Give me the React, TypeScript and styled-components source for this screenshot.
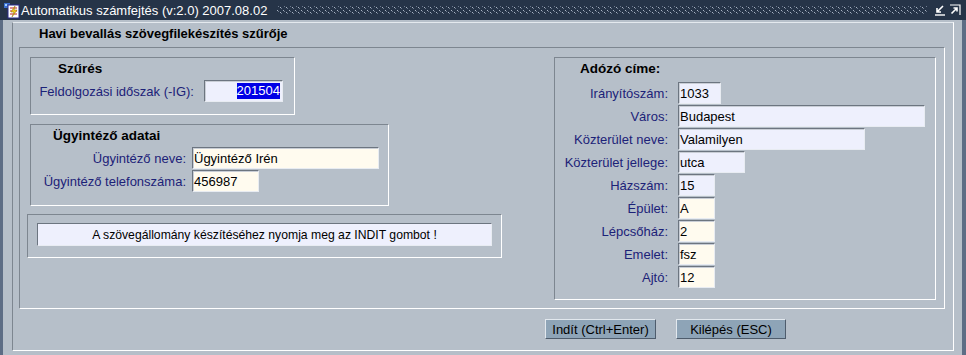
import React from "react";
import styled, { createGlobalStyle } from "styled-components";

const Global = createGlobalStyle`
  html, body { margin: 0; padding: 0; background: #b6bfc9; }
  body { font-family: "Liberation Sans", Arial, sans-serif; font-size: 13px; }
`;

const C = {
  bg: "#b6bfc9",
  title: "#263448",
  edge: "#5d6d85",
  shade: "#7d8690",
  light: "#ffffff",
  label: "#1c2278",
  lavender: "#eef0fd",
  cream: "#fffbef",
};

const Window = styled.div`
  width: 966px;
  height: 355px;
  display: flex;
  flex-direction: column;
  background: ${C.bg};
  overflow: hidden;
`;

const TitleBar = styled.div`
  height: 20px;
  flex: none;
  display: flex;
  align-items: center;
  background: ${C.title};
  padding: 0 5px 0 3px;
`;

const TitleText = styled.span`
  color: #ffffff;
  font-size: 13px;
  margin-left: 1px;
  white-space: nowrap;
`;

const Dots = styled.svg`
  flex: 1;
  height: 10px;
  margin: 0 6px 0 10px;
`;

const Controls = styled.div`
  display: flex;
  gap: 3px;
  align-items: center;
`;

const Body = styled.div`
  flex: 1;
  display: flex;
  border-left: 3px solid ${C.edge};
  border-right: 4px solid ${C.edge};
  padding: 2px 8px 4px 9px;
`;

const OuterFrame = styled.div`
  width: 942px;
  height: 329px;
  box-sizing: border-box;
  border-style: solid;
  border-width: 1px;
  border-color: #e4e9ee ${C.light} ${C.light} ${C.shade};
  display: flex;
  flex-direction: column;
`;

const Heading = styled.div`
  height: 24px;
  line-height: 22px;
  padding-left: 26px;
  font-weight: bold;
  font-size: 13px;
  color: #000;
`;

const Etched = styled.div<{ $w: number; $h: number; $ml?: number; $mt?: number }>`
  width: ${(p) => p.$w}px;
  height: ${(p) => p.$h}px;
  margin-left: ${(p) => p.$ml ?? 0}px;
  margin-top: ${(p) => p.$mt ?? 0}px;
  box-sizing: border-box;
  flex: none;
  border-style: solid;
  border-width: 1px;
  border-color: ${C.shade} ${C.light} ${C.light} ${C.shade};
`;

const BigFrame = styled(Etched)`
  display: flex;
`;

const LeftCol = styled.div`
  width: 534px;
  display: flex;
  flex-direction: column;
`;

const GroupTitle = styled.div<{ $pl: number; $h: number }>`
  font-weight: bold;
  font-size: 13.5px;
  padding-left: ${(p) => p.$pl}px;
  height: ${(p) => p.$h}px;
  line-height: ${(p) => p.$h}px;
  color: #000;
`;

const Row = styled.div<{ $lw: number; $gap: number; $pl: number }>`
  display: flex;
  align-items: center;
  height: 22px;
  padding-left: ${(p) => p.$pl}px;
  gap: ${(p) => p.$gap}px;
  margin-bottom: 1px;
  & > label {
    width: ${(p) => p.$lw}px;
  }
`;

const Label = styled.label`
  color: ${C.label};
  text-align: right;
  white-space: nowrap;
  flex: none;
  font-size: 13px;
`;

const Field = styled.div<{ $w: number; $tone: "lav" | "cream"; $right?: boolean }>`
  width: ${(p) => p.$w}px;
  height: 22px;
  box-sizing: border-box;
  flex: none;
  background: ${(p) => (p.$tone === "lav" ? C.lavender : C.cream)};
  border-style: solid;
  border-width: 1px;
  border-color: #6c7580 #e8ecf2 #e8ecf2 #6c7580;
  box-shadow: inset 1px 1px 0 #c9ced6;
  display: flex;
  align-items: center;
  justify-content: ${(p) => (p.$right ? "flex-end" : "flex-start")};
  padding: ${(p) => (p.$right ? "0 2px 0 0" : "0 0 0 1px")};
  font-size: 13px;
  color: #000;
  white-space: nowrap;
`;

const Selected = styled.span`
  background: #0000e6;
  color: #ffffff;
  line-height: 16px;
`;

const Message = styled.div`
  margin: 8px 0 0 9px;
  width: 455px;
  height: 23px;
  box-sizing: border-box;
  background: ${C.lavender};
  border-style: solid;
  border-width: 1px;
  border-color: #6c7580 #e8ecf2 #e8ecf2 #6c7580;
  display: flex;
  align-items: center;
  justify-content: center;
  font-size: 12.2px;
  color: #000;
`;

const AddressRows = styled.div`
  display: flex;
  flex-direction: column;
  margin-top: 2px;
`;

const ButtonRow = styled.div`
  display: flex;
  gap: 20px;
  margin: 10px 0 0 532px;
`;

const Button = styled.button<{ $w: number }>`
  width: ${(p) => p.$w}px;
  height: 20px;
  box-sizing: border-box;
  padding: 0;
  background: #8ea4b7;
  border-style: solid;
  border-width: 1px;
  border-color: #e2e8ee #4e5c6c #4e5c6c #e2e8ee;
  font-family: "Liberation Sans", Arial, sans-serif;
  font-size: 13px;
  color: #000;
`;

const AppIcon = () => (
  <svg width="17" height="17" viewBox="0 0 17 17">
    <rect x="1" y="1" width="6" height="5" fill="#3a6fd0" />
    <rect x="2" y="2" width="2" height="2" fill="#9fd0ff" />
    <rect x="5" y="3" width="11" height="13" fill="#ffffff" stroke="#2a2a8a" strokeWidth="1" />
    <path d="M7 6h7M7 9h7M7 12h7" stroke="#c02020" strokeWidth="1.2" />
    <path d="M12 4 L8 10 H11 L9 15 L14 8 H11 Z" fill="#f5d020" stroke="#8a6a00" strokeWidth="0.5" />
  </svg>
);

const MinIcon = () => (
  <svg width="12" height="12" viewBox="0 0 12 12">
    <path d="M9 2 L3 8 M3 4 V8 H7" stroke="#ffffff" strokeWidth="1.6" fill="none" />
    <path d="M1 11 H11" stroke="#ffffff" strokeWidth="1.4" />
  </svg>
);

const MaxIcon = () => (
  <svg width="12" height="12" viewBox="0 0 12 12">
    <path d="M1 1 H11 V11" stroke="#ffffff" strokeWidth="1.2" fill="none" />
    <path d="M2.5 9.5 L8 4 M4.5 4 H8 V7.5" stroke="#ffffff" strokeWidth="1.6" fill="none" />
  </svg>
);

type Addr = { label: string; value: string; w: number; tone: "lav" | "cream" };
const address: Addr[] = [
  { label: "Irányítószám:", value: "1033", w: 43, tone: "lav" },
  { label: "Város:", value: "Budapest", w: 247, tone: "lav" },
  { label: "Közterület neve:", value: "Valamilyen", w: 187, tone: "lav" },
  { label: "Közterület jellege:", value: "utca", w: 67, tone: "lav" },
  { label: "Házszám:", value: "15", w: 37, tone: "lav" },
  { label: "Épület:", value: "A", w: 37, tone: "cream" },
  { label: "Lépcsőház:", value: "2", w: 37, tone: "cream" },
  { label: "Emelet:", value: "fsz", w: 37, tone: "cream" },
  { label: "Ajtó:", value: "12", w: 37, tone: "cream" },
];

export default function App() {
  return (
    <Window>
      <Global />
      <TitleBar>
        <AppIcon />
        <TitleText>Automatikus számfejtés (v:2.0) 2007.08.02</TitleText>
        <Dots>
          <defs>
            <pattern id="dp" width="6" height="5" patternUnits="userSpaceOnUse">
              <rect x="0" y="0" width="1" height="1" fill="#a9b3c2" />
              <rect x="1" y="1" width="1" height="1" fill="#6d7a8e" />
              <rect x="3" y="2" width="1" height="1" fill="#a9b3c2" />
              <rect x="4" y="3" width="1" height="1" fill="#6d7a8e" />
            </pattern>
          </defs>
          <rect x="0" y="1" width="100%" height="9" fill="url(#dp)" />
        </Dots>
        <Controls>
          <MinIcon />
          <MaxIcon />
        </Controls>
      </TitleBar>
      <Body>
        <OuterFrame>
          <Heading>Havi bevallás szövegfilekészítés szűrője</Heading>
          <BigFrame $w={926} $h={262} $ml={6}>
            <LeftCol>
              <Etched $w={265} $h={58} $ml={10} $mt={9}>
                <GroupTitle $pl={27} $h={22}>Szűrés</GroupTitle>
                <Row $lw={155} $gap={10} $pl={8}>
                  <Label>Feldolgozási időszak (-IG):</Label>
                  <Field $w={79} $tone="lav" $right>
                    <Selected>201504</Selected>
                  </Field>
                </Row>
              </Etched>
              <Etched $w={359} $h={82} $ml={10} $mt={9}>
                <GroupTitle $pl={22} $h={22}>Ügyintéző adatai</GroupTitle>
                <Row $lw={146} $gap={6} $pl={9}>
                  <Label>Ügyintéző neve:</Label>
                  <Field $w={187} $tone="cream">Ügyintéző Irén</Field>
                </Row>
                <Row $lw={146} $gap={6} $pl={9}>
                  <Label>Ügyintéző telefonszáma:</Label>
                  <Field $w={67} $tone="cream">456987</Field>
                </Row>
              </Etched>
              <Etched $w={475} $h={44} $ml={7} $mt={8}>
                <Message>A szövegállomány készítéséhez nyomja meg az INDIT gombot !</Message>
              </Etched>
            </LeftCol>
            <Etched $w={382} $h={243} $mt={9}>
              <GroupTitle $pl={25} $h={22}>Adózó címe:</GroupTitle>
              <AddressRows>
                {address.map((a) => (
                  <Row key={a.label} $lw={113} $gap={10} $pl={0}>
                    <Label>{a.label}</Label>
                    <Field $w={a.w} $tone={a.tone}>{a.value}</Field>
                  </Row>
                ))}
              </AddressRows>
            </Etched>
          </BigFrame>
          <ButtonRow>
            <Button $w={111}>Indít (Ctrl+Enter)</Button>
            <Button $w={110}>Kilépés (ESC)</Button>
          </ButtonRow>
        </OuterFrame>
      </Body>
    </Window>
  );
}
